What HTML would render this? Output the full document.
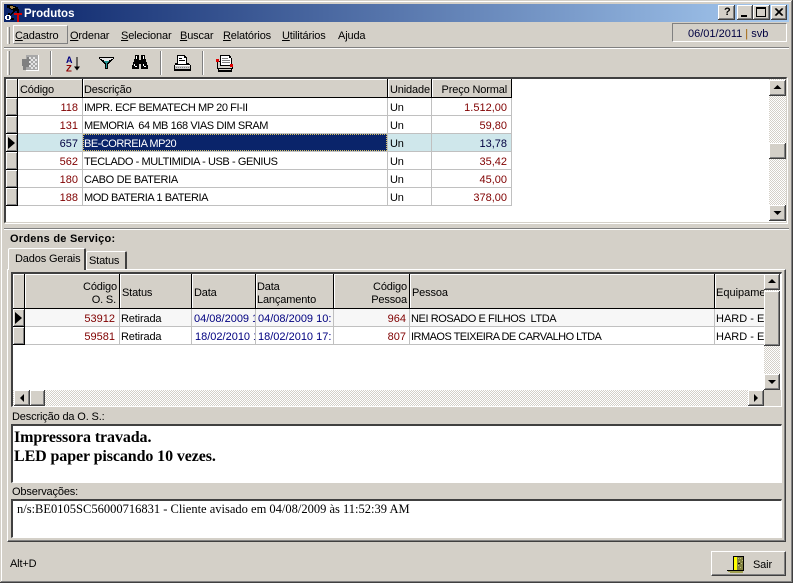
<!DOCTYPE html>
<html><head><meta charset="utf-8"><style>
html,body{margin:0;padding:0;background:#d4d0c8;width:793px;height:583px;overflow:hidden}
body{position:relative;font:11px "Liberation Sans",sans-serif;color:#000}
div,span.t{position:absolute;box-sizing:border-box}
.t{white-space:nowrap;line-height:14px;height:14px;margin-top:1px;letter-spacing:-.15px}
.c{letter-spacing:-.42px;white-space:pre}
.n{letter-spacing:0}
.r{text-align:right}
.red{color:#800000}.blue{color:#000080}
.u{text-decoration:underline}
.rs{background:#d4d0c8;box-shadow:inset -1px -1px #404040,inset 1px 1px #fff,inset -2px -2px #808080,inset 2px 2px #d4d0c8}
.hd{background:#d4d0c8;border-right:1px solid #000;border-bottom:1px solid #000;box-shadow:inset 1px 1px #fff}
.ind{background:#d4d0c8;border-right:1px solid #000;border-bottom:1px solid #000;box-shadow:inset 1px 1px #fff,inset -1px -1px #808080}
.h{background:#c0c0c0;height:1px}
.v{background:#c0c0c0;width:1px}
.chk{background:repeating-conic-gradient(#fff 0 25%,#d4d0c8 0 50%) 0 0/2px 2px}
.sep{width:2px;border-left:1px solid #808080;border-right:1px solid #fff}
svg{position:absolute;display:block}
</style></head><body>

<!-- window frame -->
<div style="left:0;top:0;width:793px;height:583px;box-shadow:inset -1px -1px #404040,inset 1px 1px #d4d0c8,inset -2px -2px #808080,inset 2px 2px #fff"></div>

<!-- title bar -->
<div style="left:4px;top:4px;width:785px;height:18px;background:linear-gradient(90deg,#0a246a,#a6caf0)"></div>
<svg style="left:5px;top:4px" width="18" height="18" viewBox="0 0 18 18" shape-rendering="crispEdges"><path d="M2 1h6v1h3v1h2v2h1v4h-2V7h-2v1h-1v1H8v1H7v1H5v-1h1V9h1V8h1V6H6V5H4V4H2z" fill="#000"/><path d="M5 2h3v1h2v1H8v1H6V4H5z" fill="#a08040"/><path d="M1 11h4v1h1v3H5v1H1v-1H0v-3h1zM2 12v3h2v-3z" fill="#fff"/><path d="M9 9h8v2h-3v7h-2v-7H9z" fill="#d80000"/><path d="M3 9h2v2H3zM6 14h3v2H6z" fill="#000"/></svg>
<span class="t" style="left:24px;top:6px;color:#fff;font-weight:bold;font-size:11.5px;letter-spacing:0">Produtos</span>
<div class="rs" style="left:718px;top:5px;width:17px;height:15px"></div><span class="t" style="left:724px;top:4px;font-weight:bold">?</span>
<div class="rs" style="left:737px;top:5px;width:16px;height:15px"></div><div style="left:741px;top:15px;width:6px;height:2px;background:#000"></div>
<div class="rs" style="left:753px;top:5px;width:17px;height:15px"></div><div style="left:756px;top:7px;width:10px;height:10px;border:1px solid #000;border-top-width:2px"></div>
<div class="rs" style="left:771px;top:5px;width:16px;height:15px"></div>
<svg style="left:771px;top:5px" width="16" height="15"><path d="M4 3.500l7 7M5 3.500l7 7M11 3.500l-7 7M12 3.500l-7 7" stroke="#000" stroke-width="1"/></svg>

<!-- menu -->
<div style="left:7px;top:27px;height:17px;width:3px;border-right:1px solid #808080;border-left:1px solid #fff"></div>
<div style="left:13px;top:25px;width:55px;height:19px;border:1px solid;border-color:#fff #808080 #808080 #fff"></div>
<span class="t" style="left:15px;top:28px"><span class="u">C</span>adastro</span>
<span class="t" style="left:70px;top:28px"><span class="u">O</span>rdenar</span>
<span class="t" style="left:121px;top:28px"><span class="u">S</span>elecionar</span>
<span class="t" style="left:180px;top:28px"><span class="u">B</span>uscar</span>
<span class="t" style="left:223px;top:28px"><span class="u">R</span>elatórios</span>
<span class="t" style="left:282px;top:28px"><span class="u">U</span>tilitários</span>
<span class="t" style="left:338px;top:28px">A<span class="u">j</span>uda</span>
<div style="left:672px;top:23px;width:115px;height:19px;border:1px solid;border-color:#808080 #fff #fff #808080"></div>
<span class="t n" style="left:688px;top:26px;color:#000040">06/01/2011 <span style="color:#a06000">|</span> svb</span>
<div style="left:4px;top:47px;width:785px;height:2px;border-top:1px solid #808080;border-bottom:1px solid #fff"></div>

<!-- toolbar -->
<div style="left:7px;top:51px;height:24px;width:3px;border-left:1px solid #fff;border-right:1px solid #808080"></div>
<div class="sep" style="left:50px;top:51px;height:24px"></div>
<div class="sep" style="left:160px;top:51px;height:24px"></div>
<div class="sep" style="left:202px;top:51px;height:24px"></div>
<svg style="left:22px;top:54px" width="17" height="17" viewBox="0 0 17 17" shape-rendering="crispEdges"><rect x="4" y="1" width="13" height="16" fill="#fff"/><path d="M4 1h12v15H4z" fill="#a8a8a8"/><path d="M0 5h5V3h3v10H4v3H1v-4H0z" fill="#808080"/><path d="M7 3h2v2H7zM11 3h2v2h-2zM9 5h2v2H9zM13 5h2v2h-2zM7 7h2v2H7zM11 7h2v2h-2zM9 9h2v2H9zM13 9h2v2h-2zM11 11h2v2h-2zM7 11h2v2H7zM13 13h2v2h-2zM9 13h2v2H9z" fill="#e4e4e4"/></svg>
<svg style="left:66px;top:55px" width="18" height="18" viewBox="0 0 18 18"><text x="0" y="8" font-family="Liberation Sans" font-weight="bold" font-size="9" fill="#000080">A</text><text x="0" y="16.500" font-family="Liberation Sans" font-weight="bold" font-size="9.500" fill="#900000">Z</text><path d="M11 2v11" stroke="#000" fill="none"/><path d="M8 11.500h6l-3 4z" fill="#000"/></svg>
<svg style="left:99px;top:57px" width="15" height="13" viewBox="0 0 15 13" shape-rendering="crispEdges"><path d="M0 0h15v2h-1v1h-1v1h-1v1h-1v1h-1v1H9v5H6V7H5V6H4V5H3V4H2V3H1V2H0z" fill="#000"/><path d="M1 1h13v1h-2v1h-2v1H5V3H3V2H1z" fill="#e8e8e8"/><path d="M5 4h5v1h-1v1H8v5H7V6H6V5H5z" fill="#209090"/></svg>
<svg style="left:132px;top:55px" width="16" height="14" viewBox="0 0 16 14" shape-rendering="crispEdges"><path d="M3 0h4v5h2V0h4v4h1v3h1v3h1v4H9V9H7v5H0v-4h1V7h1V4h1z" fill="#000"/><path d="M4 1h1v3H4zM11 1h1v3h-1zM2 9h1v2H2zM11 9h1v2h-1zM3 11h2v1H3zM12 11h2v1h-2z" fill="#fff"/></svg>
<svg style="left:174px;top:55px" width="17" height="17" viewBox="0 0 17 17" shape-rendering="crispEdges"><path d="M3 0h8v1h1v1h1v7H3z" fill="#000"/><path d="M4 1h6v2h2v6H4z" fill="#fff"/><path d="M5 3h3v1H5zM5 5h6v1H5z" fill="#000"/><path d="M1 8h2v1h10V8h2v1h1v1h1v6H0v-6h1z" fill="#000"/><path d="M1 10h15v1H1z" fill="#fff"/><path d="M1 11h15v3H1z" fill="#c8c8c8"/><path d="M2 12h1v1H2zM4 12h1v1H4zM6 12h1v1H6zM8 12h1v1H8zM10 12h1v1h-1zM12 12h1v1h-1zM14 12h1v1h-1z" fill="#808080"/></svg>
<svg style="left:216px;top:55px" width="18" height="17" viewBox="0 0 18 17" shape-rendering="crispEdges"><path d="M4 0h10v1h1v2h1v8H4z" fill="#000"/><path d="M5 1h8v2h2v7H5z" fill="#fff"/><path d="M6 3h6v1H6zM6 5h8v1H6zM6 7h8v1H6z" fill="#808080"/><path d="M1 6h3v7h12v-2h1v3h-1v3H2v-3H1z" fill="#000"/><path d="M2 7h2v6h-2zM3 14h12v1H3z" fill="#d4d0c8"/><path d="M0 4h3v3H0zM14 9h3v3h-3z" fill="#e00000"/></svg>

<!-- grid 1 -->
<div style="left:4px;top:77px;width:783px;height:146px;background:#fff;border-top:2px solid #404040;border-left:2px solid #404040;border-right:1px solid #d4d0c8;border-bottom:1px solid #d4d0c8;box-shadow:1px 1px #fff"></div>
<div class="hd" style="left:6px;top:79px;width:12px;height:19px"></div>
<div class="hd" style="left:18px;top:79px;width:65px;height:19px"></div>
<div class="hd" style="left:83px;top:79px;width:305px;height:19px"></div>
<div class="hd" style="left:388px;top:79px;width:44px;height:19px"></div>
<div class="hd" style="left:432px;top:79px;width:80px;height:19px"></div>
<span class="t" style="left:20px;top:82px">Código</span>
<span class="t" style="left:84px;top:82px">Descrição</span>
<span class="t" style="left:390px;top:82px">Unidade</span>
<span class="t r" style="left:434px;top:82px;width:73px">Preço Normal</span>
<!-- rows -->
<div style="left:18px;top:134px;width:65px;height:17px;background:#cfe7eb"></div>
<div style="left:83px;top:134px;width:304px;height:17px;background:#0a246a;outline:1px dotted #d4c060;outline-offset:-1px"></div>
<div style="left:388px;top:134px;width:124px;height:17px;background:#cfe7eb"></div>
<div class="ind" style="left:6px;top:98px;width:12px;height:18px"></div>
<div class="ind" style="left:6px;top:116px;width:12px;height:18px"></div>
<div class="ind" style="left:6px;top:134px;width:12px;height:18px"></div>
<div class="ind" style="left:6px;top:152px;width:12px;height:18px"></div>
<div class="ind" style="left:6px;top:170px;width:12px;height:18px"></div>
<div class="ind" style="left:6px;top:188px;width:12px;height:18px"></div>
<svg style="left:8px;top:137px" width="8" height="12"><path d="M0 0l7 6-7 6z" fill="#000"/></svg>
<div class="h" style="left:18px;top:115px;width:494px"></div>
<div class="h" style="left:18px;top:133px;width:494px"></div>
<div class="h" style="left:18px;top:151px;width:494px"></div>
<div class="h" style="left:18px;top:169px;width:494px"></div>
<div class="h" style="left:18px;top:187px;width:494px"></div>
<div class="h" style="left:18px;top:205px;width:494px"></div>
<div class="v" style="left:82px;top:98px;height:108px"></div>
<div class="v" style="left:387px;top:98px;height:108px"></div>
<div class="v" style="left:431px;top:98px;height:108px"></div>
<div class="v" style="left:511px;top:98px;height:108px"></div>
<span class="t r red n" style="left:20px;top:100px;width:58px">118</span><span class="t c" style="left:84px;top:100px">IMPR. ECF BEMATECH MP 20 FI-II</span><span class="t" style="left:390px;top:100px">Un</span><span class="t r red n" style="left:434px;top:100px;width:73px">1.512,00</span>
<span class="t r red n" style="left:20px;top:118px;width:58px">131</span><span class="t c" style="left:84px;top:118px">MEMORIA  64 MB 168 VIAS DIM SRAM</span><span class="t" style="left:390px;top:118px">Un</span><span class="t r red n" style="left:434px;top:118px;width:73px">59,80</span>
<span class="t r n" style="left:20px;top:136px;width:58px;color:#000040">657</span><span class="t c" style="left:84px;top:136px;color:#fff;letter-spacing:-.5px">BE-CORREIA MP20</span><span class="t" style="left:390px;top:136px">Un</span><span class="t r n" style="left:434px;top:136px;width:73px;color:#000040">13,78</span>
<span class="t r red n" style="left:20px;top:154px;width:58px">562</span><span class="t c" style="left:84px;top:154px">TECLADO - MULTIMIDIA - USB - GENIUS</span><span class="t" style="left:390px;top:154px">Un</span><span class="t r red n" style="left:434px;top:154px;width:73px">35,42</span>
<span class="t r red n" style="left:20px;top:172px;width:58px">180</span><span class="t c" style="left:84px;top:172px;letter-spacing:-.33px">CABO DE BATERIA</span><span class="t" style="left:390px;top:172px">Un</span><span class="t r red n" style="left:434px;top:172px;width:73px">45,00</span>
<span class="t r red n" style="left:20px;top:190px;width:58px">188</span><span class="t c" style="left:84px;top:190px">MOD BATERIA 1 BATERIA</span><span class="t" style="left:390px;top:190px">Un</span><span class="t r red n" style="left:434px;top:190px;width:73px">378,00</span>
<!-- grid1 scrollbar -->
<div class="chk" style="left:769px;top:79px;width:17px;height:142px"></div>
<div class="rs" style="left:769px;top:80px;width:17px;height:16px"></div>
<svg style="left:769px;top:80px" width="17" height="16"><path d="M8.500 5l4 4h-8z" fill="#000"/></svg>
<div class="rs" style="left:769px;top:143px;width:17px;height:16px"></div>
<div class="rs" style="left:769px;top:205px;width:17px;height:16px"></div>
<svg style="left:769px;top:205px" width="17" height="16"><path d="M4.500 6h8l-4 4z" fill="#000"/></svg>

<div style="left:4px;top:228px;width:785px;height:2px;border-top:1px solid #808080;border-bottom:1px solid #fff"></div>
<span class="t" style="left:10px;top:231px;font-weight:bold;letter-spacing:.25px">Ordens de Serviço:</span>

<!-- tab page -->
<div style="left:7px;top:269px;width:779px;height:273px;border:1px solid;border-color:#fff #404040 #404040 #fff;box-shadow:inset -1px -1px #808080"></div>
<!-- tabs -->
<div style="left:86px;top:251px;width:41px;height:18px;background:#d4d0c8;border-top:1px solid #fff;border-left:1px solid #fff;border-right:2px solid #404040;border-radius:2px 2px 0 0"></div>
<span class="t" style="left:89px;top:253px">Status</span>
<div style="left:8px;top:248px;width:78px;height:22px;background:#d4d0c8;border-top:1px solid #fff;border-left:1px solid #fff;border-right:2px solid #404040;border-radius:2px 2px 0 0"></div>
<span class="t" style="left:15px;top:251px">Dados Gerais</span>

<!-- grid 2 -->
<div style="left:11px;top:272px;width:771px;height:135px;background:#fff;border-top:2px solid #404040;border-left:2px solid #404040;border-right:1px solid #fff;border-bottom:1px solid #fff"></div>
<div class="hd" style="left:13px;top:274px;width:12px;height:35px"></div>
<div class="hd" style="left:25px;top:274px;width:95px;height:35px"></div>
<div class="hd" style="left:120px;top:274px;width:72px;height:35px"></div>
<div class="hd" style="left:192px;top:274px;width:64px;height:35px"></div>
<div class="hd" style="left:256px;top:274px;width:78px;height:35px"></div>
<div class="hd" style="left:334px;top:274px;width:76px;height:35px"></div>
<div class="hd" style="left:410px;top:274px;width:305px;height:35px"></div>
<div class="hd" style="left:715px;top:274px;width:50px;height:35px"></div>
<span class="t r" style="left:30px;top:279px;width:87px">Código</span><span class="t r" style="left:30px;top:292px;width:86px">O. S.</span>
<span class="t" style="left:122px;top:285px">Status</span>
<span class="t" style="left:194px;top:285px">Data</span>
<span class="t" style="left:257px;top:279px">Data</span><span class="t" style="left:257px;top:292px">Lançamento</span>
<span class="t r" style="left:340px;top:279px;width:67px">Código</span><span class="t r" style="left:340px;top:292px;width:67px">Pessoa</span>
<span class="t" style="left:412px;top:285px">Pessoa</span>
<span class="t n" style="left:716px;top:285px;width:48px;overflow:hidden">Equipamento</span>

<div style="left:25px;top:309px;width:739px;height:17px;background:#f7f7f7"></div>
<div class="ind" style="left:13px;top:309px;width:12px;height:18px"></div>
<div class="ind" style="left:13px;top:327px;width:12px;height:18px"></div>
<svg style="left:15px;top:312px" width="8" height="12"><path d="M0 0l7 6-7 6z" fill="#000"/></svg>
<div class="h" style="left:25px;top:326px;width:739px"></div>
<div class="h" style="left:25px;top:344px;width:739px"></div>
<div class="v" style="left:119px;top:309px;height:36px"></div>
<div class="v" style="left:191px;top:309px;height:36px"></div>
<div class="v" style="left:255px;top:309px;height:36px"></div>
<div class="v" style="left:333px;top:309px;height:36px"></div>
<div class="v" style="left:409px;top:309px;height:36px"></div>
<div class="v" style="left:714px;top:309px;height:36px"></div>
<span class="t r red n" style="left:30px;top:311px;width:85px">53912</span><span class="t" style="left:121px;top:311px">Retirada</span><span class="t blue n" style="left:194px;top:311px;width:61px;overflow:hidden">04/08/2009 10:</span><span class="t blue n" style="left:258px;top:311px;width:75px;overflow:hidden">04/08/2009 10:</span><span class="t r red n" style="left:340px;top:311px;width:66px">964</span><span class="t c" style="left:411px;top:311px">NEI ROSADO E FILHOS  LTDA</span><span class="t n" style="left:716px;top:311px;width:48px;overflow:hidden">HARD - EQUIP</span>
<span class="t r red n" style="left:30px;top:329px;width:85px">59581</span><span class="t" style="left:121px;top:329px">Retirada</span><span class="t blue n" style="left:195px;top:329px;width:60px;overflow:hidden">18/02/2010 17:</span><span class="t blue n" style="left:258px;top:329px;width:75px;overflow:hidden">18/02/2010 17:</span><span class="t r red n" style="left:340px;top:329px;width:66px">807</span><span class="t c" style="left:411px;top:329px;letter-spacing:-.52px">IRMAOS TEIXEIRA DE CARVALHO LTDA</span><span class="t n" style="left:716px;top:329px;width:48px;overflow:hidden">HARD - EQUIP</span>
<!-- grid 2 scrollbars -->
<div class="chk" style="left:764px;top:290px;width:16px;height:100px"></div>
<div class="rs" style="left:764px;top:274px;width:16px;height:16px"></div>
<svg style="left:764px;top:274px" width="16" height="16"><path d="M8 5l4 4H4z" fill="#000"/></svg>
<div class="rs" style="left:764px;top:291px;width:16px;height:55px"></div>
<div class="rs" style="left:764px;top:374px;width:16px;height:16px"></div>
<svg style="left:764px;top:374px" width="16" height="16"><path d="M4 6h8l-4 4z" fill="#000"/></svg>
<div class="chk" style="left:13px;top:390px;width:751px;height:16px"></div>
<div style="left:764px;top:390px;width:17px;height:16px;background:#d4d0c8"></div>
<div class="rs" style="left:14px;top:390px;width:16px;height:16px"></div>
<svg style="left:14px;top:390px" width="16" height="16"><path d="M10 4v8L6 8z" fill="#000"/></svg>
<div class="rs" style="left:30px;top:390px;width:15px;height:16px"></div>
<div class="rs" style="left:748px;top:390px;width:16px;height:16px"></div>
<svg style="left:748px;top:390px" width="16" height="16"><path d="M6 4v8l4-4z" fill="#000"/></svg>

<!-- memos -->
<span class="t" style="left:12px;top:409px">Descrição da O. S.:</span>
<div style="left:11px;top:424px;width:771px;height:59px;background:#fff;border-top:2px solid #404040;border-left:2px solid #404040;border-right:1px solid #fff;border-bottom:1px solid #fff"></div>
<span class="t" style="left:14px;top:427px;font:bold 16px/19px 'Liberation Serif',serif;height:19px;letter-spacing:-.1px">Impressora travada.</span>
<span class="t" style="left:14px;top:446px;font:bold 16px/19px 'Liberation Serif',serif;height:19px;letter-spacing:-.1px">LED paper piscando 10 vezes.</span>
<span class="t" style="left:12px;top:484px">Observações:</span>
<div style="left:11px;top:499px;width:771px;height:39px;background:#fff;border-top:2px solid #404040;border-left:2px solid #404040;border-right:1px solid #fff;border-bottom:1px solid #fff"></div>
<span class="t n" style="left:17px;top:501px;font:12.5px/14px 'Liberation Serif',serif">n/s:BE0105SC56000716831 - Cliente avisado em 04/08/2009 às 11:52:39 AM</span>

<!-- footer -->
<span class="t" style="left:10px;top:556px">Alt+D</span>
<div style="left:711px;top:551px;width:75px;height:25px;border:1px solid;border-color:#fff #404040 #404040 #fff;box-shadow:inset -1px -1px #808080"></div>
<svg style="left:727px;top:556px" width="17" height="17" viewBox="0 0 17 17" shape-rendering="crispEdges"><path d="M6 0h11v15H6z" fill="#000"/><path d="M7 1h9v13H7z" fill="#ffff00"/><path d="M10 1h6v13h-6z" fill="#808040"/><path d="M11 2h1v1h-1zM13 2h1v1h-1zM15 4h1v1h-1zM12 5h1v1h-1zM14 7h1v1h-1zM11 9h1v1h-1zM13 11h1v1h-1z" fill="#c0c080"/><path d="M11 7h2v1h-2z" fill="#000"/><path d="M0 14h6v1H0z" fill="#000"/><path d="M1 15h15v1H1zM3 16h13v1H3z" fill="#a0a050"/></svg>
<span class="t" style="left:753px;top:557px">Sair</span>

</body></html>
